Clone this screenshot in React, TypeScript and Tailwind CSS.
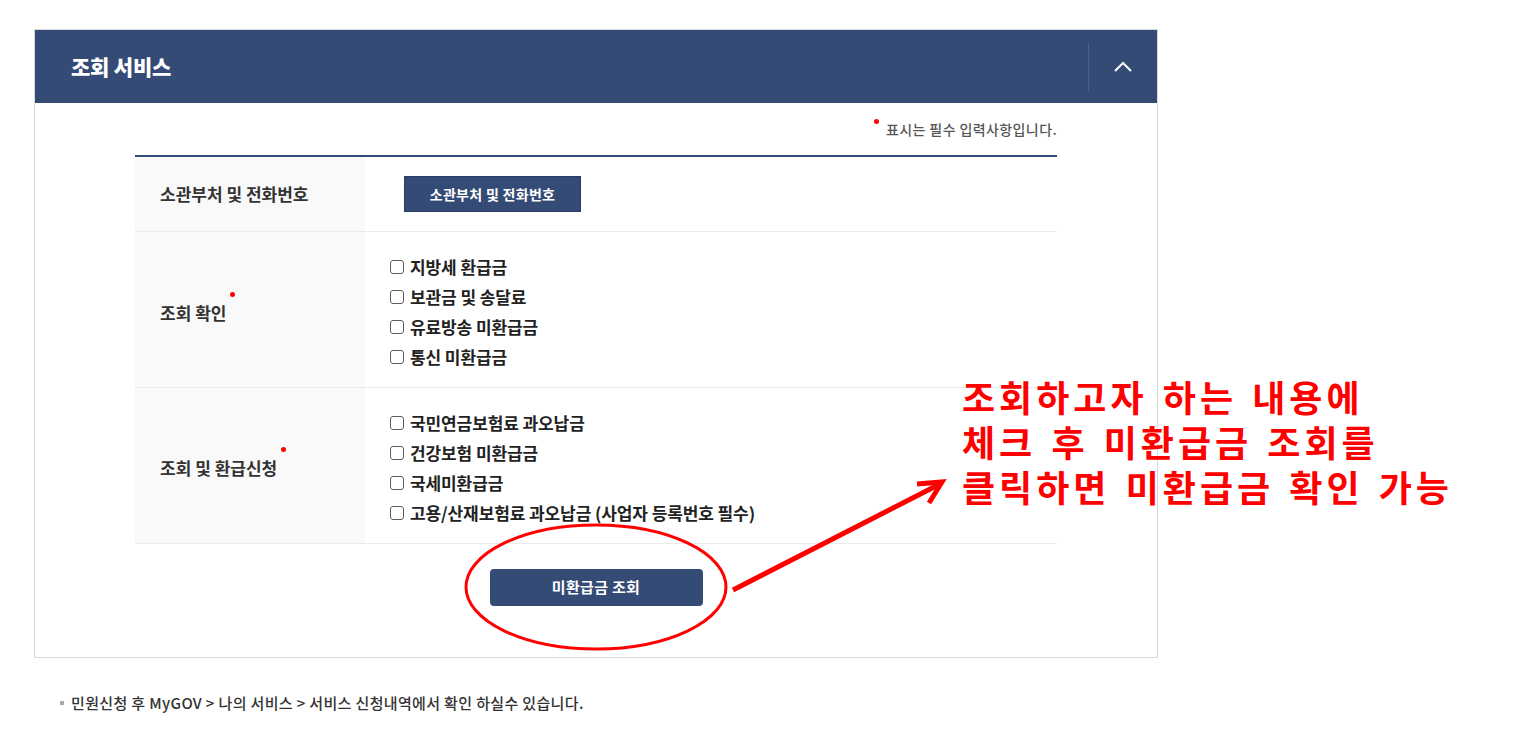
import { useState } from "react";

const font = { fontFamily: '"Noto Sans CJK KR", "Noto Sans", sans-serif' };

const lookupItems = ["지방세 환급금", "보관금 및 송달료", "유료방송 미환급금", "통신 미환급금"];
const refundItems = [
  "국민연금보험료 과오납금",
  "건강보험 미환급금",
  "국세미환급금",
  "고용/산재보험료 과오납금 (사업자 등록번호 필수)",
];

function Required({ children }: { children: React.ReactNode }) {
  return (
    <span className="relative inline-block">
      {children}
      <span className="absolute -right-[9px] -top-[8px] w-[5px] h-[5px] rounded-full bg-[#ff0000]" />
    </span>
  );
}

function CheckList({ items }: { items: string[] }) {
  return (
    <div className="flex flex-col">
      {items.map((item) => (
        <label key={item} className="flex items-center h-[30px] gap-[6px] cursor-pointer">
          <input
            type="checkbox"
            className="appearance-none w-[14px] h-[14px] border border-[#5e5e5e] rounded-[3px] bg-white checked:bg-[#344b76]"
          />
          <span className="text-[17px] font-bold text-[#222] tracking-[-0.1px]">{item}</span>
        </label>
      ))}
    </div>
  );
}

export default function App() {
  const [open, setOpen] = useState(true);

  return (
    <div className="relative min-h-screen bg-white" style={font}>
      <div className="pt-[29px] pl-[34px]">
        <section className="w-[1124px] border border-[#d9d9d9] bg-white">
          <header className="h-[73px] bg-[#344b76] flex items-center justify-between">
            <h2 className="pl-[36px] text-[21px] font-black text-white tracking-[-0.2px]">조회 서비스</h2>
            <div className="h-[48px] w-[69px] border-l border-[#4a5f86] flex items-center justify-center">
              <button onClick={() => setOpen(!open)} className="text-white">
                <svg width="20" height="12" viewBox="0 0 20 12" fill="none">
                  <path d="M2 10 L10 2 L18 10" stroke="white" strokeWidth="2" />
                </svg>
              </button>
            </div>
          </header>

          <div className="px-[100px] pt-[16px] pb-[51px]">
            <p className="flex justify-end items-start h-[20px] text-[14px] leading-[20px] font-medium text-[#555] tracking-[0.4px]">
              <span className="w-[5px] h-[5px] rounded-full bg-[#ff0000] mr-[7px]" />
              표시는 필수 입력사항입니다.
            </p>

            <div className="mt-[16px] border-t-2 border-[#344b76]">
              <div className="flex border-b border-[#ebebeb]">
                <div className="w-[230px] h-[74px] bg-[#f9f9f9] flex items-center pl-[25px] text-[17px] font-bold text-[#333] tracking-[0px]">
                  소관부처 및 전화번호
                </div>
                <div className="flex-1 flex items-center pl-[39px]">
                  <button className="w-[177px] h-[36px] bg-[#344b76] border border-[#2a3d62] text-white text-[14px] font-bold tracking-[0.3px]">
                    소관부처 및 전화번호
                  </button>
                </div>
              </div>

              <div className="flex border-b border-[#ebebeb]">
                <div className="w-[230px] bg-[#f9f9f9] flex items-center pl-[25px] pt-[6px] text-[17px] font-bold text-[#333]">
                  <Required>조회 확인</Required>
                </div>
                <div className="flex-1 pl-[25px] pt-[20px] pb-[15px]">
                  <CheckList items={lookupItems} />
                </div>
              </div>

              <div className="flex border-b border-[#ebebeb]">
                <div className="w-[230px] bg-[#f9f9f9] flex items-center pl-[25px] pt-[4px] text-[17px] font-bold text-[#333]">
                  <Required>조회 및 환급신청</Required>
                </div>
                <div className="flex-1 pl-[25px] pt-[20px] pb-[15px]">
                  <CheckList items={refundItems} />
                </div>
              </div>
            </div>

            <div className="flex justify-center mt-[25px]">
              <button className="w-[213px] h-[37px] rounded-[4px] bg-[#344b76] text-white text-[15px] font-bold tracking-[0.3px]">
                미환급금 조회
              </button>
            </div>
          </div>
        </section>

        <p className="mt-[34px] pl-[26px] flex items-center text-[15px] font-medium text-[#333] tracking-[0.35px]">
          <span className="w-[4px] h-[4px] bg-[#aaa] mr-[7px]" />
          민원신청 후 MyGOV &gt; 나의 서비스 &gt; 서비스 신청내역에서 확인 하실수 있습니다.
        </p>
      </div>

      <svg className="absolute left-0 top-0 pointer-events-none" width="1524" height="735">
        <ellipse cx="596" cy="587" rx="130" ry="62" fill="none" stroke="#ff0000" strokeWidth="3" />
        <path d="M733 590 L938 485" stroke="#ff0000" strokeWidth="5" />
        <path d="M917 484 L942 482 L929 503" stroke="#ff0000" strokeWidth="5" fill="none" />
      </svg>

      <div className="absolute left-[962px] top-[374px] text-[36px] leading-[45px] font-bold text-[#ff0000] tracking-[4px] [word-spacing:3px] whitespace-nowrap pointer-events-none">
        <div>조회하고자 하는 내용에</div>
        <div>체크 후 미환급금 조회를</div>
        <div>클릭하면 미환급금 확인 가능</div>
      </div>
    </div>
  );
}
